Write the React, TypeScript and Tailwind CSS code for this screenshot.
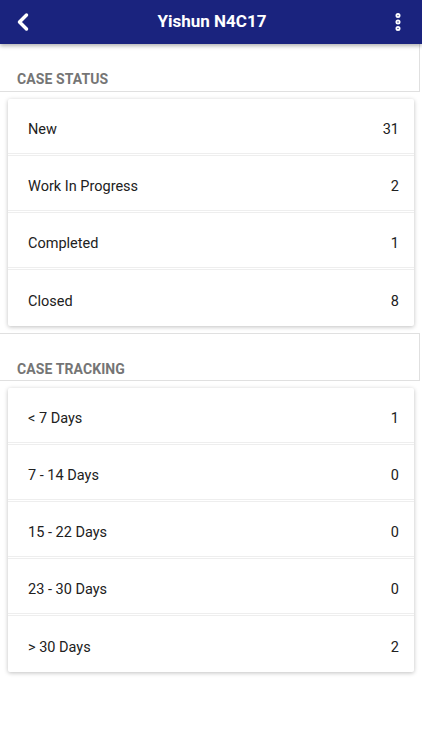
import { ChevronLeft, EllipsisVertical } from "lucide-react";

const caseStatus = [
  { label: "New", count: 31 },
  { label: "Work In Progress", count: 2 },
  { label: "Completed", count: 1 },
  { label: "Closed", count: 8 },
];

const caseTracking = [
  { label: "< 7 Days", count: 1 },
  { label: "7 - 14 Days", count: 0 },
  { label: "15 - 22 Days", count: 0 },
  { label: "23 - 30 Days", count: 0 },
  { label: "> 30 Days", count: 2 },
];

function SectionHeader({ title, top }: { title: string; top?: boolean }) {
  return (
    <div
      className={`mr-[2px] h-[48px] border-r border-b border-[#e0e0e0] bg-white px-[17px] pt-[27px] ${
        top ? "border-t" : ""
      }`}
    >
      <h2 className="text-[14px] font-bold leading-[16px] tracking-[0.1px] text-[#757575]">
        {title}
      </h2>
    </div>
  );
}

function Card({ rows }: { rows: { label: string; count: number }[] }) {
  return (
    <div className="mx-2 my-[7px] rounded-[2px] bg-white shadow-[0_1px_4px_rgba(0,0,0,0.25)]">
      {rows.map((row, i) => {
        const last = i === rows.length - 1;
        return (
          <div
            key={row.label}
            className={`flex items-center justify-between pl-5 pr-[15px] pt-[7px] text-[14.5px] text-[#212121] ${
              last ? "h-[56px]" : "h-[57px] border-b-[3px] border-double border-[#eeeeee]"
            }`}
          >
            <span>{row.label}</span>
            <span>{row.count}</span>
          </div>
        );
      })}
    </div>
  );
}

export default function App() {
  return (
    <div className="min-h-[750px] w-[422px] bg-white font-['Roboto',sans-serif]">
      <header className="relative z-10 flex h-[44px] items-center bg-[#1a237e] shadow-[0_2px_4px_rgba(0,0,0,0.3)]">
        <ChevronLeft className="ml-[9px] size-[28px] text-white" strokeWidth={3} />
        <h1 className="flex-1 text-center text-[17px] font-bold text-white">
          Yishun N4C17
        </h1>
        <EllipsisVertical className="mr-[13px] size-[22px] text-white" strokeWidth={3.5} />
      </header>

      <SectionHeader title="CASE STATUS" />
      <Card rows={caseStatus} />

      <SectionHeader title="CASE TRACKING" top />
      <Card rows={caseTracking} />
    </div>
  );
}
